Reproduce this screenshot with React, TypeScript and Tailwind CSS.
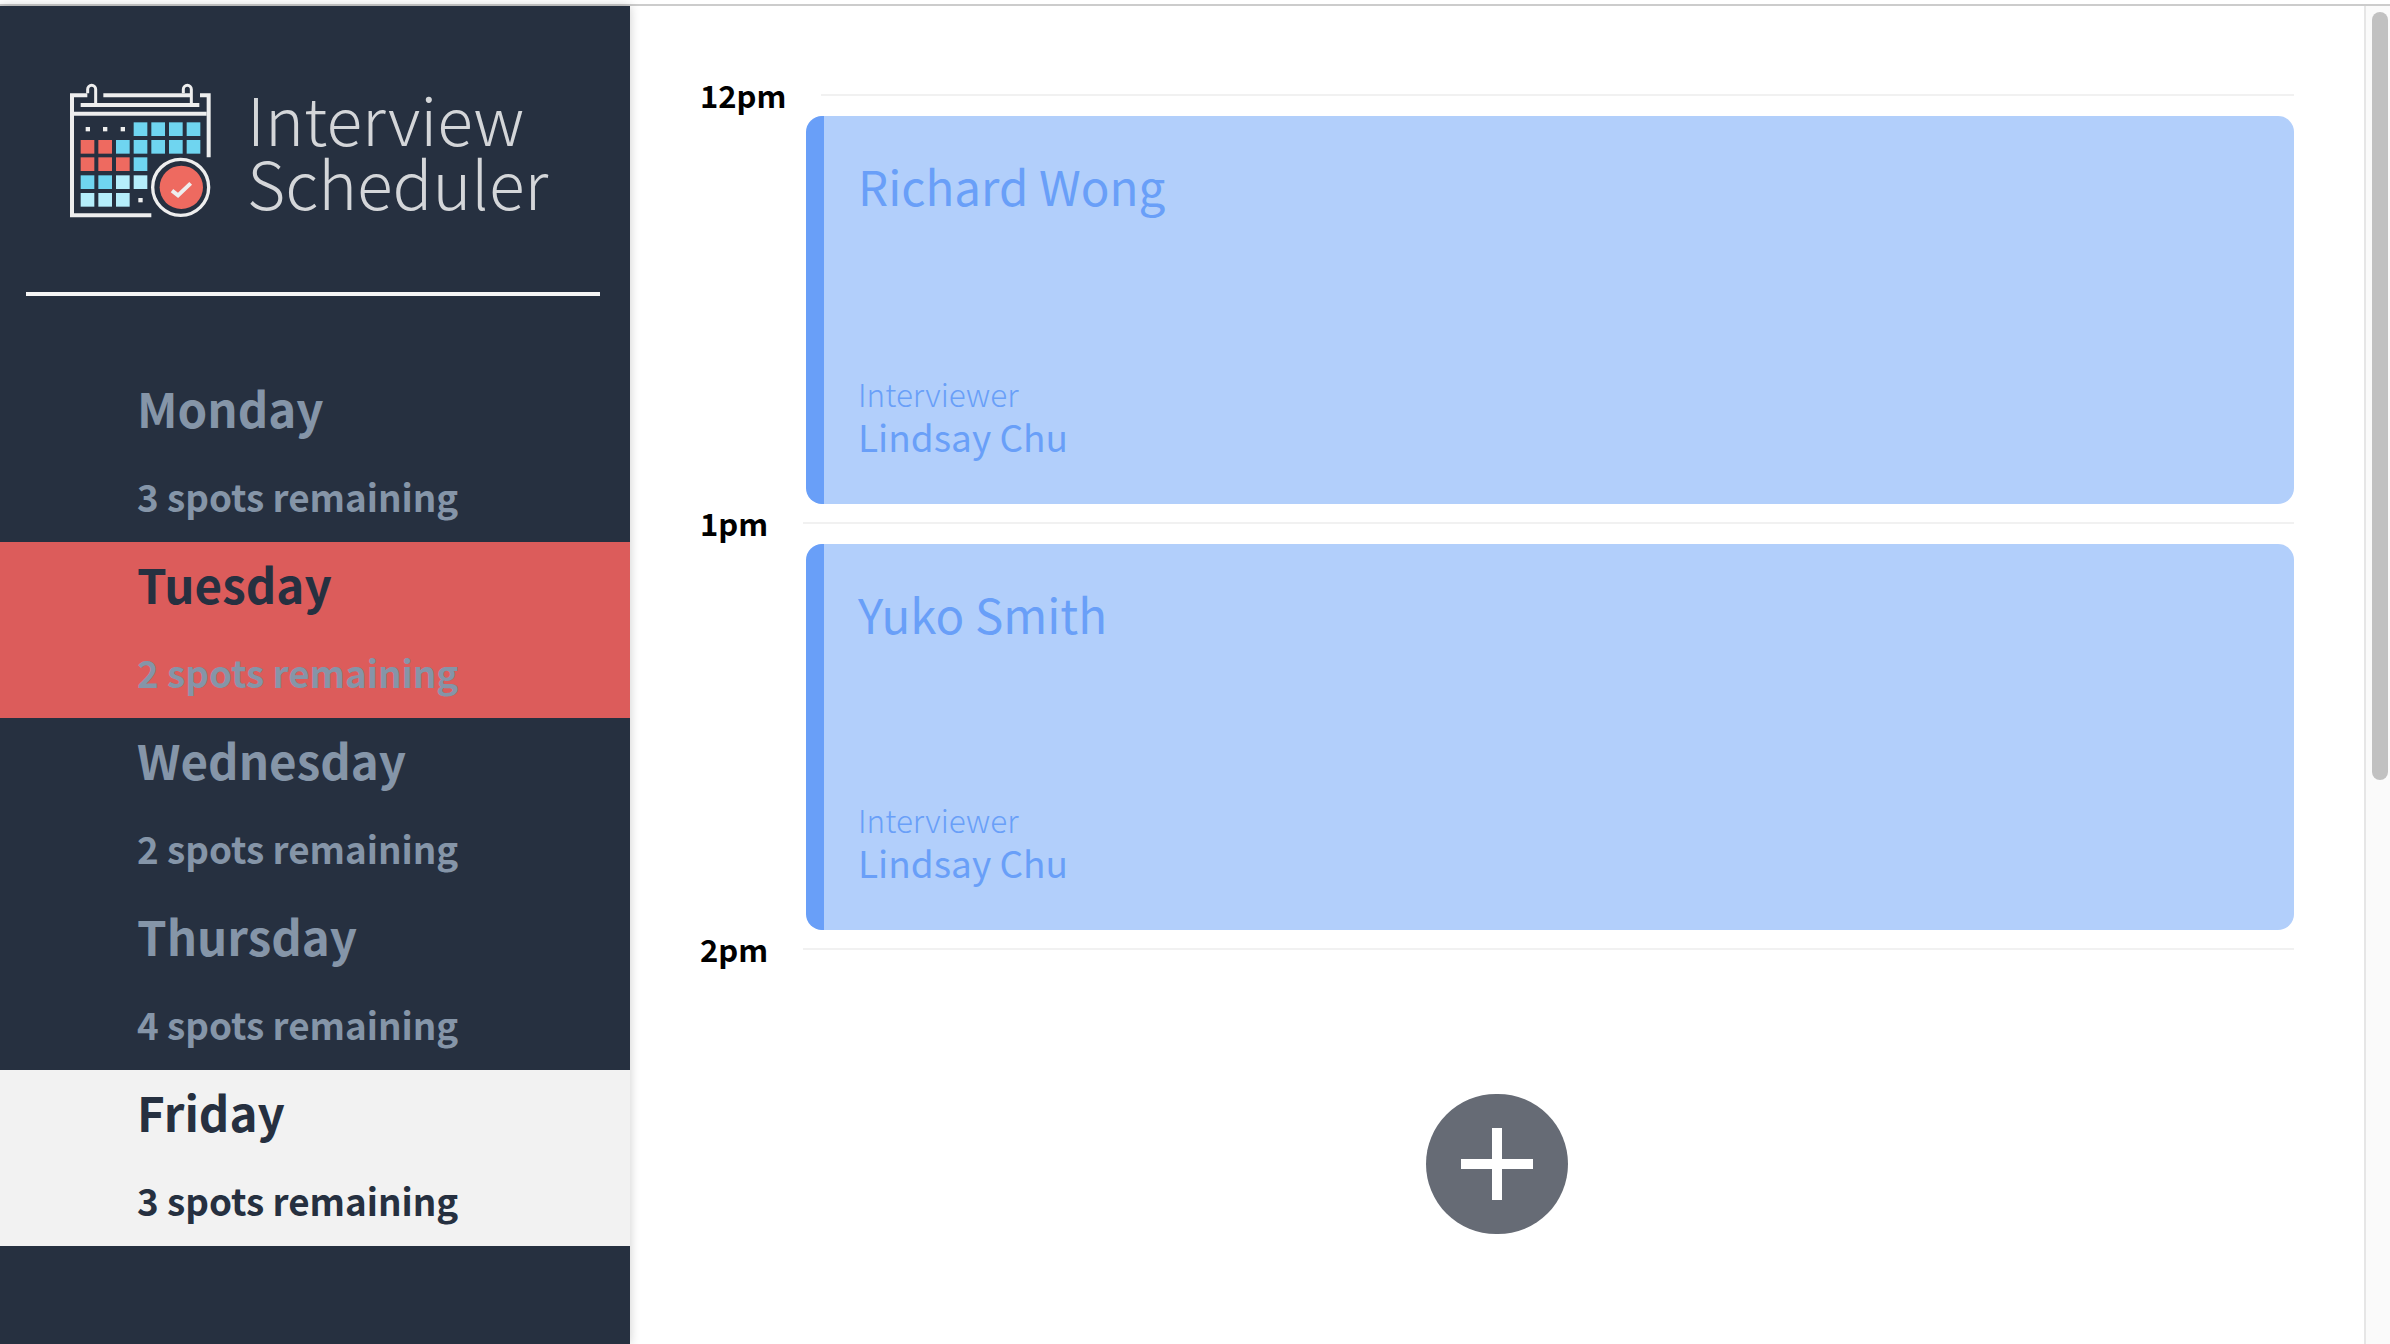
import React from 'react'

const days = [
  { name: 'Monday', spots: '3 spots remaining', row: 'bg-[#263040]', title: 'text-[#8595a8]', sub: 'text-[#8595a8]' },
  { name: 'Tuesday', spots: '2 spots remaining', row: 'bg-[#dc5c5b]', title: 'text-[#263040]', sub: 'text-[#8595a8]' },
  { name: 'Wednesday', spots: '2 spots remaining', row: 'bg-[#263040]', title: 'text-[#8595a8]', sub: 'text-[#8595a8]' },
  { name: 'Thursday', spots: '4 spots remaining', row: 'bg-[#263040]', title: 'text-[#8595a8]', sub: 'text-[#8595a8]' },
  { name: 'Friday', spots: '3 spots remaining', row: 'bg-[#f2f2f2]', title: 'text-[#263040]', sub: 'text-[#263040]' },
]

const cols = [92, 145, 198, 251, 304, 357, 410]
const rows = [187, 240, 292, 346, 399]
const blue = '#6fd5f0'
const red = '#ee6a60'
const pale = '#b5eefb'

// one entry per row: colour for each column, null is an empty cell
const cells: (string | null)[][] = [
  [null, null, null, blue, blue, blue, blue],
  [red, red, blue, blue, blue, blue, blue],
  [red, red, red, blue, null, null, null],
  [blue, blue, pale, pale, null, null, null],
  [pale, pale, pale, null, null, null, null],
]

function Logo() {
  return (
    <svg viewBox="0 0 540 510" className="h-[170px] w-[180px]" fill="none" stroke="#eeeeee">
      <path d="M112 106H66V466H304" strokeWidth="12" />
      <path d="M450 106H476V292" strokeWidth="12" />
      <path d="M160 106H420" strokeWidth="12" />
      <path d="M92 135H448" strokeWidth="12" />
      <path d="M72 161H470" strokeWidth="12" />
      <path d="M113 100V88a12 12 0 0 1 24 0V130" strokeWidth="9" />
      <path d="M400 100V88a12 12 0 0 1 24 0V130" strokeWidth="9" />
      {cells.map((line, r) =>
        line.map((color, c) =>
          color ? <rect key={`${r}-${c}`} x={cols[c]} y={rows[r]} width="41" height="41" fill={color} stroke="none" /> : null,
        ),
      )}
      {[
        [107, 201],
        [159, 201],
        [212, 201],
        [265, 414],
      ].map(([x, y]) => (
        <rect key={x} x={x} y={y} width="13" height="13" fill="#eeeeee" stroke="none" />
      ))}
      <circle cx="392" cy="382" r="84" strokeWidth="10" />
      <circle cx="394" cy="382" r="65" fill={red} stroke="none" />
      <path d="M366 392L384 406L422 370" strokeWidth="12" />
    </svg>
  )
}

function TimeLine({ label }: { label: string }) {
  return (
    <div className="mb-[2px] flex h-[38px] items-center pl-[70px] pr-[70px]">
      <span className="text-[31px] font-bold leading-[38px] text-black">{label}</span>
      <div className="ml-[35px] h-[2px] flex-1 bg-[#f1f1f1]" />
    </div>
  )
}

function Appointment({ student, height }: { student: string; height: string }) {
  return (
    <div className={`ml-[176px] mr-[70px] flex flex-col justify-between rounded-[16px] border-l-[18px] border-[#699ff8] bg-[#b2cffb] pb-[46px] pl-[34px] pt-[35px] text-[#699ff8] ${height}`}>
      <div className="text-[47.5px] leading-[70px]">{student}</div>
      <div>
        <div className="text-[31.5px] font-light leading-[43px]">Interviewer</div>
        <div className="text-[37px] leading-[43px]">Lindsay Chu</div>
      </div>
    </div>
  )
}

export default function App() {
  return (
    <div className="flex h-screen flex-col overflow-hidden bg-white font-['Noto_Sans_CJK_SC','Noto_Sans',sans-serif]">
      <div className="h-[6px] shrink-0 border-b-2 border-[#cccccc]" />
      <div className="flex min-h-0 flex-1">
        {/* Sidebar */}
        <aside className="relative z-10 w-[630px] shrink-0 bg-[#263040] shadow-[0_0_10px_rgba(0,0,0,0.2)]">
          <div className="flex h-[286px] items-start">
            <div className="ml-[50px] mt-[54px]">
              <Logo />
            </div>
            <div className="ml-[17px] mt-[79px] text-[66px] font-light leading-[64px] text-[#d4d6d9]">
              <div>Interview</div>
              <div>Scheduler</div>
            </div>
          </div>
          <div className="ml-[26px] mr-[30px] h-[4px] bg-[#f5f5f5]" />
          <nav className="mt-[70px]">
            {days.map((day) => (
              <div key={day.name} className={`h-[176px] pl-[137px] pt-[7px] ${day.row}`}>
                <div className={`text-[47.5px] font-bold leading-[70px] ${day.title}`}>{day.name}</div>
                <div className={`mt-[23px] text-[36.8px] font-bold leading-[60px] ${day.sub}`}>{day.spots}</div>
              </div>
            ))}
          </nav>
        </aside>

        {/* Schedule */}
        <main className="min-w-0 flex-1 pt-[70px]">
          <TimeLine label="12pm" />
          <Appointment student="Richard Wong" height="h-[388px]" />
          <TimeLine label="1pm" />
          <Appointment student="Yuko Smith" height="h-[386px]" />
          <TimeLine label="2pm" />
          <div className="mt-[126px] flex justify-center">
            <button className="flex h-[140px] w-[142px] items-center justify-center rounded-full bg-[#666b75]">
              <svg viewBox="0 0 72 72" className="h-[72px] w-[72px]" fill="#ffffff">
                <rect x="0" y="31" width="72" height="10" />
                <rect x="31" y="0" width="10" height="72" />
              </svg>
            </button>
          </div>
        </main>

        {/* Scrollbar */}
        <div className="w-[26px] shrink-0 border-l-2 border-[#e6e6e6] bg-[#fafafa] pl-[6px] pt-[6px]">
          <div className="h-[768px] w-[16px] rounded-full bg-[#c1c1c1]" />
        </div>
      </div>
    </div>
  )
}
